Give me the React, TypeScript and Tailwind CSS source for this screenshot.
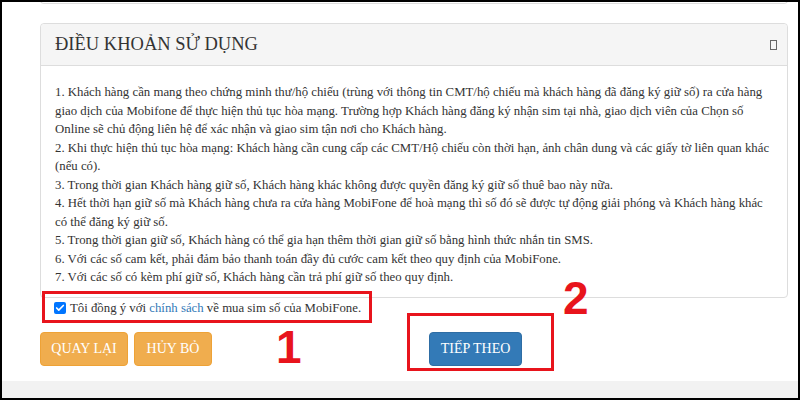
import { Check } from 'lucide-react';

const terms = [
  '1. Khách hàng cần mang theo chứng minh thư/hộ chiếu (trùng với thông tin CMT/hộ chiếu mà khách hàng đã đăng ký giữ số) ra cửa hàng giao dịch của Mobifone để thực hiện thủ tục hòa mạng. Trường hợp Khách hàng đăng ký nhận sim tại nhà, giao dịch viên của Chọn số Online sẽ chủ động liên hệ để xác nhận và giao sim tận nơi cho Khách hàng.',
  '2. Khi thực hiện thủ tục hòa mạng: Khách hàng cần cung cấp các CMT/Hộ chiếu còn thời hạn, ảnh chân dung và các giấy tờ liên quan khác (nếu có).',
  '3. Trong thời gian Khách hàng giữ số, Khách hàng khác không được quyền đăng ký giữ số thuê bao này nữa.',
  '4. Hết thời hạn giữ số mà Khách hàng chưa ra cửa hàng MobiFone để hoà mạng thì số đó sẽ được tự động giải phóng và Khách hàng khác có thể đăng ký giữ số.',
  '5. Trong thời gian giữ số, Khách hàng có thể gia hạn thêm thời gian giữ số bằng hình thức nhắn tin SMS.',
  '6. Với các số cam kết, phải đảm bảo thanh toán đầy đủ cước cam kết theo quy định của MobiFone.',
  '7. Với các số có kèm phí giữ số, Khách hàng cần trả phí giữ số theo quy định.',
];

export default function App() {
  return (
    <div
      className="relative flex h-[400px] w-[800px] flex-col overflow-hidden border-2 border-black bg-white text-[#333]"
      style={{ fontFamily: '"Liberation Serif", "Times New Roman", serif' }}
    >
      {/* bottom of the previous panel */}
      <div className="ml-[38px] mr-[10px] -mt-[2px] h-[4px] rounded-b border border-t-0 border-[#ddd]" />

      <div className="ml-[38px] mr-[10px] mt-[19px] rounded border border-[#ddd]">
        <div className="flex h-[42px] items-center justify-between rounded-t border-b border-[#ddd] bg-[#f5f5f5] pl-[14px] pr-[10px]">
          <h3 className="text-[18.5px] leading-none">ĐIỀU KHOẢN SỬ DỤNG</h3>
          <span className="inline-block h-[10px] w-[7px] border border-[#666]" />
        </div>
        <div className="pb-[10px] pl-[14px] pr-[13px] pt-[17px] text-[12.8px] leading-[18.5px]">
          {terms.map((t) => (
            <p key={t}>{t}</p>
          ))}
        </div>
      </div>

      <label className="ml-[52px] flex items-center gap-[4px] text-[12.8px] leading-[20px]">
        <span className="flex h-[12px] w-[12px] items-center justify-center rounded-[2px] bg-[#0075ff]">
          <Check className="h-[10px] w-[10px] text-white" strokeWidth={4} />
        </span>
        <span>
          Tôi đồng ý với <span className="text-[#337ab7]">chính sách</span> về mua sim số của MobiFone.
        </span>
      </label>

      <div className="ml-[38px] mt-[14px] flex items-start">
        <button className="h-[34px] w-[88px] rounded border border-[#eea236] bg-[#f0ad4e] text-[14px] text-white">
          QUAY LẠI
        </button>
        <button className="ml-[6px] h-[34px] w-[78px] rounded border border-[#eea236] bg-[#f0ad4e] text-[14px] text-white">
          HỦY BỎ
        </button>
        <button className="ml-[217px] h-[34px] w-[93px] rounded border border-[#2e6da4] bg-[#337ab7] text-[14px] text-white">
          TIẾP THEO
        </button>
      </div>

      <div className="mt-auto h-[17px] bg-[#f2f2f2]" />

      {/* annotations */}
      <div className="absolute left-[40px] top-[289px] h-[32px] w-[330px] border-[3px] border-[#e8141c]" />
      <div className="absolute left-[405px] top-[311px] h-[58px] w-[147px] border-[3px] border-[#e8141c]" />
      <span
        className="absolute left-[274px] top-[322px] text-[46px] font-bold leading-none text-[#e8141c]"
        style={{ fontFamily: '"Liberation Sans", Arial, sans-serif' }}
      >
        1
      </span>
      <span
        className="absolute left-[561px] top-[273px] text-[46px] font-bold leading-none text-[#e8141c]"
        style={{ fontFamily: '"Liberation Sans", Arial, sans-serif' }}
      >
        2
      </span>
    </div>
  );
}
